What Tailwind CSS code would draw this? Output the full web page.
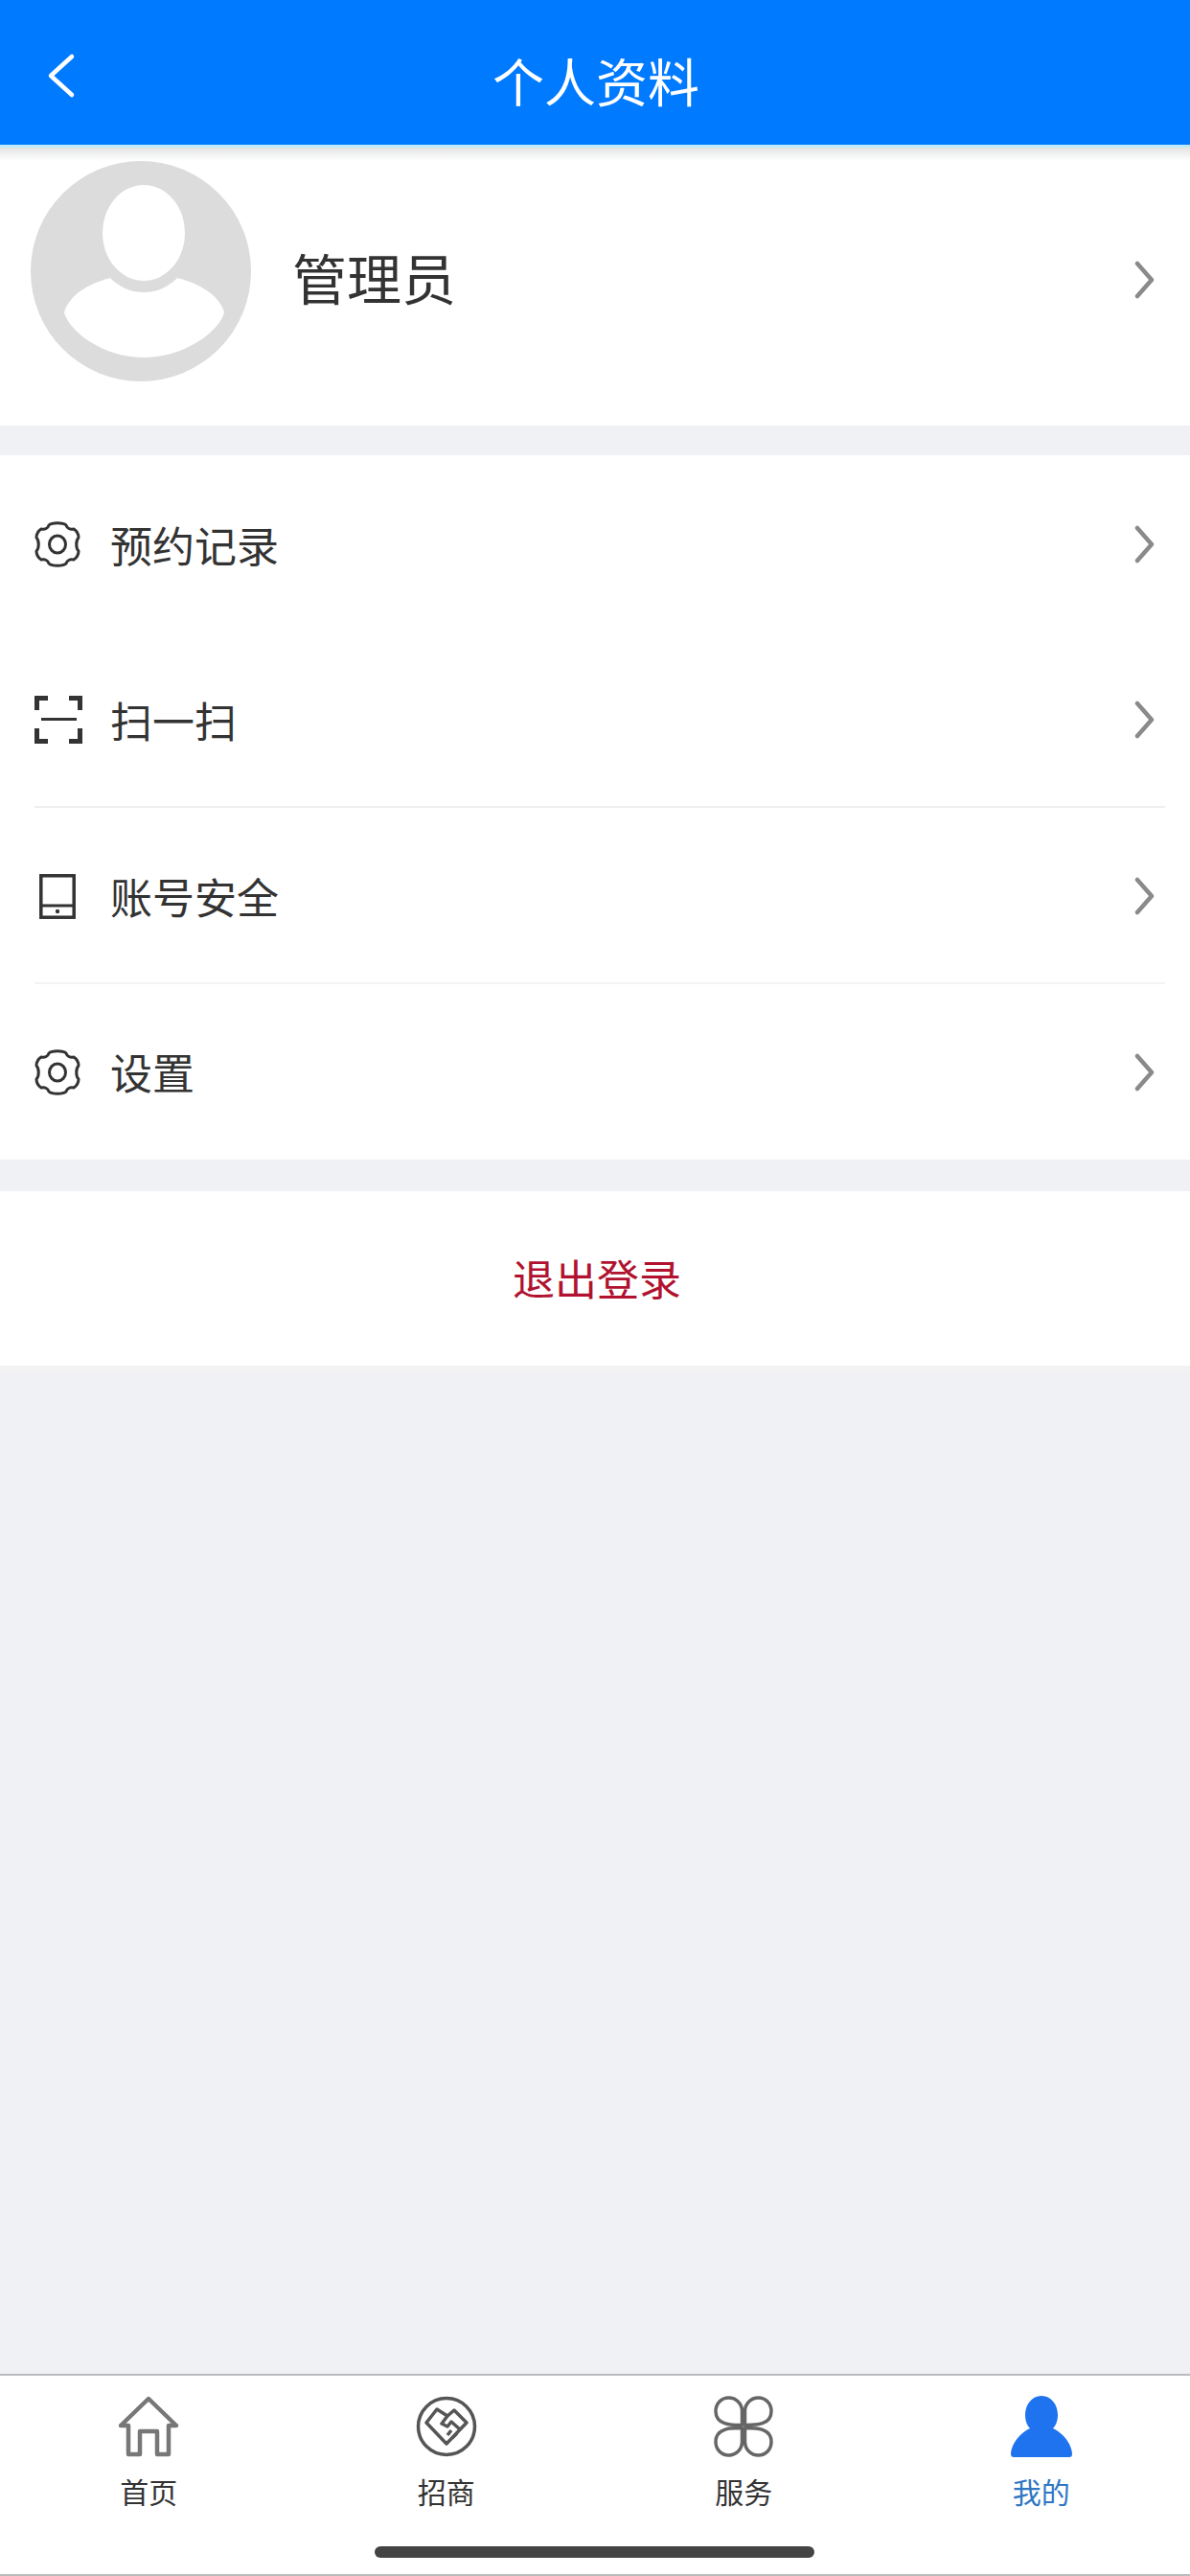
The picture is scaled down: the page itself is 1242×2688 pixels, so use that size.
<!DOCTYPE html>
<html lang="zh-CN">
<head>
    <meta charset="UTF-8">
    <meta name="viewport" content="width=device-width, initial-scale=1.0">
    <title>个人资料</title>
    <script src="https://cdn.jsdelivr.net/npm/@tailwindcss/browser@4"></script>
</head>
<body class="font-['Liberation_Sans','Noto_Sans_CJK_SC',sans-serif] text-[#333]">

    <div class="w-[1242px] h-[2688px] flex flex-col bg-[#f0f1f5] overflow-hidden">

        <!-- Header -->
        <header class="relative h-[151px] shrink-0 bg-[#007aff] flex items-end justify-center pb-[36px] text-white text-[54px] leading-[60px]">
            <svg class="absolute left-[49px] top-[55px] w-[30px] h-[48px]" viewBox="0 0 30 48" fill="none" stroke="#fff" stroke-width="4.5" stroke-linecap="round" stroke-linejoin="round"><path d="M26 4 L4 24 L26 44"/></svg>
            <span class="translate-x-[1px] translate-y-[3px]">个人资料</span>
        </header>
        <div class="h-[3px] shrink-0 bg-[#bfeaf7]"></div>

        <!-- Profile -->
        <section class="relative h-[290px] shrink-0 bg-white flex items-center pl-[32px] pr-[36px] pb-[14px]">
            <div class="absolute inset-x-0 top-0 h-[14px] bg-gradient-to-b from-[#e3e4e4] to-white"></div>
            <svg class="relative -mt-[18px] w-[230px] h-[230px] shrink-0" viewBox="0 0 230 230">
                <circle cx="115" cy="115" r="115" fill="#dcdcdc"/>
                <path d="M35 158 C40 138 70 118 118 118 C166 118 197 138 202 158 C197 178 160 205 118 205 C76 205 40 178 35 158 Z" fill="#fff"/>
                <ellipse cx="118" cy="80" rx="52" ry="57" fill="#dcdcdc"/>
                <ellipse cx="118" cy="75" rx="43" ry="50" fill="#fff"/>
            </svg>
            <span class="ml-[43px] translate-y-[1px] text-[57px] leading-[64px] flex-1">管理员</span>
            <svg class="w-[22px] h-[40px]" viewBox="0 0 22 40" fill="none" stroke="#8a8a8a" stroke-width="4.5" stroke-linecap="round" stroke-linejoin="round"><path d="M3 3 L18 20 L3 37"/></svg>
        </section>

        <!-- Menu -->
        <section class="mt-[31px] shrink-0 bg-white flex flex-col">
            <div class="h-[183px] flex items-center pl-[36px] pr-[36px] pt-[2px]">
                <svg class="w-[48px] h-[48px]" viewBox="0 0 48 48" fill="none" stroke="#333" stroke-width="3" stroke-linejoin="round"><path d="M15 4 C18 1 30 1 33 4 C34 7 37 9 41 8 C44 10 46 14 46 17 C43 20 43 28 46 31 C46 34 44 38 41 40 C37 39 34 41 33 44 C30 47 18 47 15 44 C14 41 11 39 7 40 C4 38 2 34 2 31 C5 28 5 20 2 17 C2 14 4 10 7 8 C11 9 14 7 15 4 Z"/><ellipse cx="24" cy="24" rx="8.5" ry="9"/></svg>
                <span class="ml-[31px] translate-y-[4px] text-[44px] leading-[52px] flex-1">预约记录</span>
                <svg class="w-[22px] h-[40px]" viewBox="0 0 22 40" fill="none" stroke="#8a8a8a" stroke-width="4.5" stroke-linecap="round" stroke-linejoin="round"><path d="M3 3 L18 20 L3 37"/></svg>
            </div>
            <div class="h-[185px] flex items-center pl-[36px] pr-[36px] relative">
                <svg class="w-[50px] h-[50px]" viewBox="0 0 50 50" fill="none" stroke="#333" stroke-width="5"><path d="M14 2.5 H2.5 V15 M36 2.5 H47.5 V15 M2.5 34 V47.5 H14 M47.5 34 V47.5 H36"/><path d="M7 24.5 H44" stroke-width="3"/></svg>
                <span class="ml-[29px] translate-y-[4px] text-[44px] leading-[52px] flex-1">扫一扫</span>
                <svg class="w-[22px] h-[40px]" viewBox="0 0 22 40" fill="none" stroke="#8a8a8a" stroke-width="4.5" stroke-linecap="round" stroke-linejoin="round"><path d="M3 3 L18 20 L3 37"/></svg>
                <div class="absolute left-[36px] right-[26px] bottom-0 h-[2px] bg-[#eeeeee]"></div>
            </div>
            <div class="h-[184px] flex items-center pl-[41px] pr-[36px] relative">
                <svg class="w-[38px] h-[47px]" viewBox="0 0 38 47" fill="none" stroke="#333" stroke-width="3.5"><rect x="1.8" y="1.8" width="34.4" height="43.4"/><path d="M1.8 33 H36.2" stroke-width="3"/><circle cx="19" cy="39" r="2.2" fill="#333" stroke="none"/></svg>
                <span class="ml-[36px] translate-y-[4px] text-[44px] leading-[52px] flex-1">账号安全</span>
                <svg class="w-[22px] h-[40px]" viewBox="0 0 22 40" fill="none" stroke="#8a8a8a" stroke-width="4.5" stroke-linecap="round" stroke-linejoin="round"><path d="M3 3 L18 20 L3 37"/></svg>
                <div class="absolute left-[36px] right-[26px] bottom-0 h-[2px] bg-[#f3f3f3]"></div>
            </div>
            <div class="h-[183px] flex items-center pl-[36px] pr-[36px]">
                <svg class="w-[48px] h-[48px]" viewBox="0 0 48 48" fill="none" stroke="#333" stroke-width="3" stroke-linejoin="round"><path d="M15 4 C18 1 30 1 33 4 C34 7 37 9 41 8 C44 10 46 14 46 17 C43 20 43 28 46 31 C46 34 44 38 41 40 C37 39 34 41 33 44 C30 47 18 47 15 44 C14 41 11 39 7 40 C4 38 2 34 2 31 C5 28 5 20 2 17 C2 14 4 10 7 8 C11 9 14 7 15 4 Z"/><ellipse cx="24" cy="24" rx="8.5" ry="9"/></svg>
                <span class="ml-[31px] translate-y-[3px] text-[44px] leading-[52px] flex-1">设置</span>
                <svg class="w-[22px] h-[40px]" viewBox="0 0 22 40" fill="none" stroke="#8a8a8a" stroke-width="4.5" stroke-linecap="round" stroke-linejoin="round"><path d="M3 3 L18 20 L3 37"/></svg>
            </div>
        </section>

        <!-- Logout -->
        <section class="mt-[33px] h-[182px] shrink-0 bg-white flex items-center justify-center text-[44px] leading-[52px] text-[#b0122f]"><span class="translate-x-[2px] translate-y-[3px]">退出登录</span></section>
        <div class="h-[8px] shrink-0 bg-[#f2f2f3]"></div>

        <div class="flex-1"></div>

        <!-- Tab bar -->
        <nav class="relative h-[211px] shrink-0 bg-white border-t-2 border-b-2 border-[#b9bcbd] grid grid-cols-4 text-[30px] leading-[36px]">
            <div class="flex flex-col items-center pt-[21px]">
                <svg class="w-[64px] h-[64px]" viewBox="0 0 64 64" fill="none" stroke="#777" stroke-width="4.5" stroke-linejoin="round"><path d="M32 3 L61 31 L53 31 L53 61 L41 61 L41 37 L23 37 L23 61 L11 61 L11 31 L3 31 Z"/></svg>
                <span class="mt-[20px]">首页</span>
            </div>
            <div class="flex flex-col items-center pt-[21px]">
                <svg class="w-[64px] h-[64px]" viewBox="0 0 64 64" fill="none" stroke="#555" stroke-width="3.5" stroke-linejoin="round"><circle cx="32" cy="32" r="29.5"/><path d="M32 50 L11 28 L22 14 L33 21 L40 15 L53 28 Z"/><path d="M33 21 L27 29 L33 32 L37 27 L46 35 M43 39 L38 44 M37 36 L33 41"/></svg>
                <span class="mt-[20px]">招商</span>
            </div>
            <div class="flex flex-col items-center pt-[21px]">
                <svg class="w-[64px] h-[64px]" viewBox="0 0 64 64" fill="none" stroke="#666" stroke-width="3.5" stroke-linejoin="round"><path d="M30.5 30.5 C20 30.5 3 31 3 16 C3 8 9 2 16.5 2 C24 2 30.5 8 30.5 16 Z"/><path d="M33.5 30.5 C44 30.5 61 31 61 16 C61 8 55 2 47.5 2 C40 2 33.5 8 33.5 16 Z"/><path d="M30.5 33.5 C20 33.5 3 33 3 48 C3 56 9 62 16.5 62 C24 62 30.5 56 30.5 48 Z"/><path d="M33.5 33.5 C44 33.5 61 33 61 48 C61 56 55 62 47.5 62 C40 62 33.5 56 33.5 48 Z"/></svg>
                <span class="mt-[20px]">服务</span>
            </div>
            <div class="flex flex-col items-center pt-[21px] text-[#2f76c4]">
                <svg class="w-[64px] h-[64px]" viewBox="0 0 64 64" fill="#1f73ee"><path d="M32 0 C42 0 49 9 49 20 C49 26 47 31 44 34 C55 39 63 50 64 60 C64 63 63 64 61 64 L3 64 C1 64 0 63 0 60 C1 50 9 39 20 34 C17 31 15 26 15 20 C15 9 22 0 32 0 Z"/></svg>
                <span class="mt-[20px]">我的</span>
            </div>
            <div class="absolute left-[391px] bottom-[17px] w-[459px] h-[12px] rounded-full bg-[#444]"></div>
        </nav>
    </div>
</body>
</html>
